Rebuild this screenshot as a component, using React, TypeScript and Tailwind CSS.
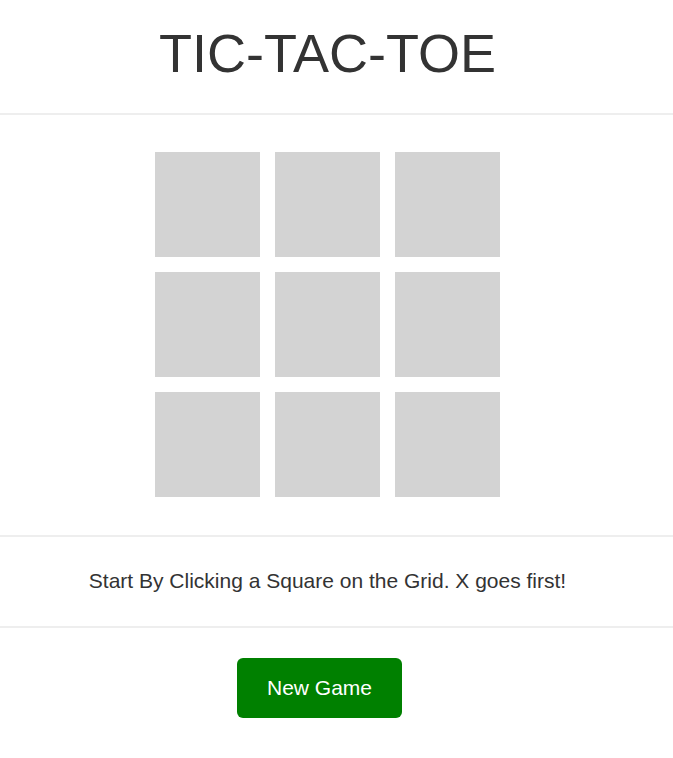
export default function App() {
  const cells = Array.from({ length: 9 });
  return (
    <div className="min-h-[758px] bg-white text-[#333] font-['Liberation_Sans',Arial,sans-serif]">
      <div className="w-[655px]">
        <h1 className="pt-[26px] h-[113px] text-center text-[54px] leading-[54px] font-normal">
          TIC-TAC-TOE
        </h1>
      </div>
      <div className="h-[2px] bg-[#eeeeee]"></div>
      <div className="w-[655px] flex justify-center pt-[37px] pb-[38px]">
        <div className="grid grid-cols-3 gap-[15px]">
          {cells.map((_, i) => (
            <button key={i} className="w-[105px] h-[105px] bg-[#d3d3d3]"></button>
          ))}
        </div>
      </div>
      <div className="h-[2px] bg-[#eeeeee]"></div>
      <div className="w-[655px] pt-[33px] pb-[35px] text-center text-[21px] leading-[21px]">
        Start By Clicking a Square on the Grid. X goes first!
      </div>
      <div className="h-[2px] bg-[#eeeeee]"></div>
      <div className="w-[655px] flex justify-center pt-[30px]">
        <button className="mr-[16px] w-[165px] h-[60px] rounded-[6px] bg-[#008000] text-white text-[21px]">
          New Game
        </button>
      </div>
    </div>
  );
}
